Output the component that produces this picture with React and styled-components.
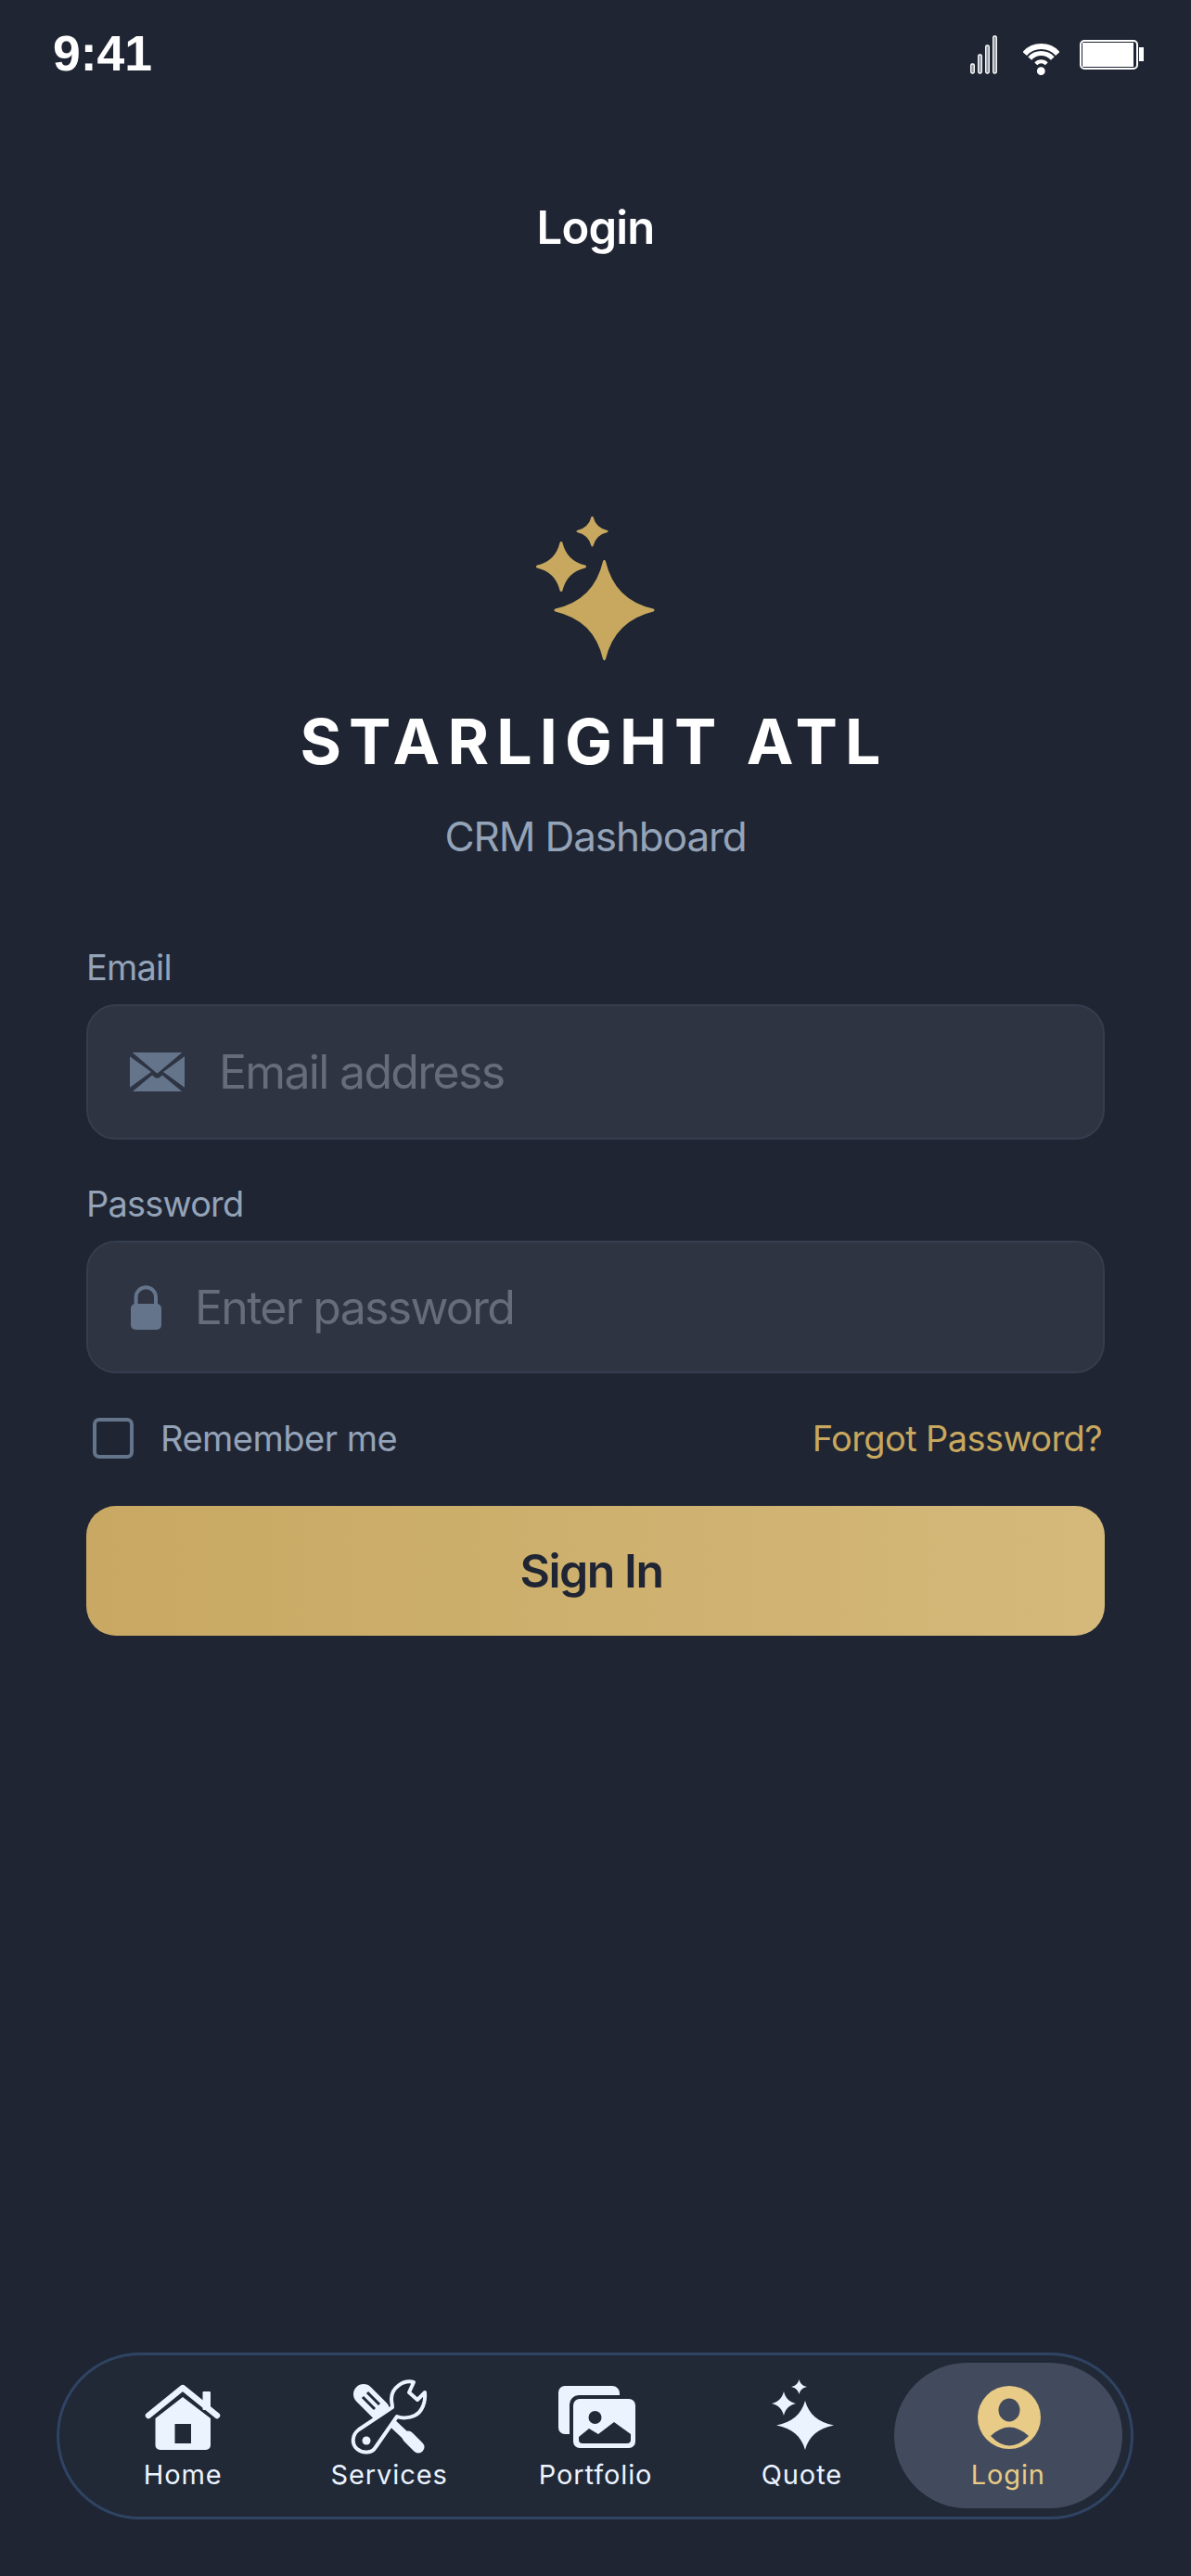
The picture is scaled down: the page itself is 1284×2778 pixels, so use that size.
import React from "react";
import styled, { createGlobalStyle } from "styled-components";

const BG = "#1f2533";
const ICON = "#ebf3ff";
const GOLD = "#c8a85f";
const SLATE = "#94a3b8";
const MUTED = "#64748b";

const Global = createGlobalStyle`
  * { box-sizing: border-box; }
  html, body { margin: 0; padding: 0; background: ${BG}; }
  body { font-family: Inter, "Liberation Sans", sans-serif; }
`;

const Page = styled.div`
  min-height: 2778px;
  display: flex;
  flex-direction: column;
  background: ${BG};
  color: #fff;
`;

const StatusBar = styled.div`
  height: 116px;
  padding: 0 51px 0 57px;
  display: flex;
  align-items: center;
  justify-content: space-between;
`;

const Time = styled.div`
  font-family: "Liberation Sans", Arial, sans-serif;
  font-weight: 700;
  font-size: 53.5px;
  line-height: 60px;
`;

const StatusIcons = styled.div`
  display: flex;
  align-items: center;
  gap: ${(p) => p.$gap || 0}px;
  svg { display: block; }
`;

const IconCluster = styled.div`
  display: flex;
  align-items: center;
  gap: 28px;
`;

const Header = styled.h1`
  height: 258px;
  margin: 0;
  display: flex;
  align-items: center;
  justify-content: center;
  font-size: 49px;
  font-weight: 600;
  letter-spacing: -0.8px;
  color: #fff;
`;

const Brand = styled.section`
  padding-top: 183px;
  display: flex;
  flex-direction: column;
  align-items: center;
  svg { display: block; }
`;

const BrandName = styled.div`
  margin-top: 47px;
  font-size: 68px;
  line-height: 80px;
  font-weight: 700;
  letter-spacing: 8.1px;
  margin-right: 3px;
  color: #fff;
`;

const BrandSub = styled.div`
  margin-top: 33px;
  font-size: 44px;
  line-height: 60px;
  letter-spacing: -1.1px;
  color: ${SLATE};
`;

const Form = styled.form`
  margin: 86px 93px 0;
  display: flex;
  flex-direction: column;
`;

const FieldLabel = styled.label`
  font-size: 38px;
  line-height: 50px;
  letter-spacing: -0.8px;
  color: ${SLATE};
  margin-top: ${(p) => p.$top || 0}px;
`;

const InputBox = styled.div`
  margin-top: 15px;
  height: ${(p) => p.$height}px;
  padding: 0 45px;
  display: flex;
  align-items: center;
  gap: ${(p) => p.$gap}px;
  background: #2e3442;
  border: 2px solid #353d4f;
  border-radius: 32px;
  svg { display: block; flex: none; }
`;

const Input = styled.input`
  flex: 1;
  min-width: 0;
  border: 0;
  outline: 0;
  padding: 0;
  background: transparent;
  font: 400 50px Inter, "Liberation Sans", sans-serif;
  letter-spacing: -1.7px;
  color: #fff;
  &::placeholder { color: #666c79; opacity: 1; }
`;

const OptionsRow = styled.div`
  margin-top: 48px;
  height: 44px;
  padding: 0 3px 0 7px;
  display: flex;
  align-items: center;
  justify-content: space-between;
`;

const Remember = styled.label`
  display: flex;
  align-items: center;
  gap: 29px;
  font-size: 38px;
  letter-spacing: -0.5px;
  color: ${SLATE};
`;

const CheckBox = styled.span`
  width: 44px;
  height: 44px;
  border: 4px solid ${MUTED};
  border-radius: 7px;
`;

const Forgot = styled.a`
  font-size: 38px;
  letter-spacing: -0.6px;
  color: ${GOLD};
`;

const SignIn = styled.button`
  margin-top: 51px;
  padding: 0 9px 0 0;
  height: 140px;
  border: 0;
  border-radius: 32px;
  background: linear-gradient(90deg, #c8a862, #d4b97b);
  font: 600 50px Inter, "Liberation Sans", sans-serif;
  letter-spacing: -1.5px;
  color: #1f2533;
`;

const Nav = styled.nav`
  margin: auto 62px 61px 61px;
  height: 180px;
  padding: 8px 21px 9px 22px;
  display: grid;
  grid-template-columns: repeat(5, 1fr);
  background: #212937;
  border: 3px solid #2f4362;
  border-radius: 90px;
`;

const NavItem = styled.div`
  margin: ${(p) => (p.$active ? "0 -12px" : "0")};
  padding-top: 12px;
  display: flex;
  flex-direction: column;
  align-items: center;
  background: ${(p) => (p.$active ? "#424b5d" : "transparent")};
  border-radius: 80px;
  color: ${(p) => (p.$active ? "#e8cb86" : ICON)};
  svg { display: block; flex: none; }
`;

const NavLabel = styled.span`
  font-size: 29px;
  line-height: 36px;
  font-weight: 400;
  letter-spacing: 0.9px;
  margin-top: 1px;
`;

const star = (cx, cy, rx, ry, a = 0.13, b = 0.45) => {
  const p = (x, y) => `${(cx + x * rx).toFixed(2)} ${(cy + y * ry).toFixed(2)}`;
  return (
    `M${p(0, -1)} C${p(a, -b)} ${p(b, -a)} ${p(1, 0)} ` +
    `C${p(b, a)} ${p(a, b)} ${p(0, 1)} ` +
    `C${p(-a, b)} ${p(-b, a)} ${p(-1, 0)} ` +
    `C${p(-b, -a)} ${p(-a, -b)} ${p(0, -1)}Z`
  );
};

const SignalIcon = () => (
  <svg width="29" height="46" viewBox="0 0 29 46">
    {[34, 24, 14, 4].map((y, i) => (
      <rect key={y} x={0.7 + i * 8} y={y} width="3.6" height={44 - y} rx="1.4" fill="#8d929c" stroke="#fff" strokeWidth="1.3" />
    ))}
  </svg>
);

const WifiIcon = () => (
  <svg width="39" height="46" viewBox="0 0 39 46" fill="none" stroke="#fff">
    <path d="M1.7 23 A24 24 0 0 1 37.3 23" strokeWidth="6" />
    <path d="M7.2 28 A16.5 16.5 0 0 1 31.8 28" strokeWidth="5" />
    <path d="M13.8 33.8 A7.7 7.7 0 0 1 25.2 33.8" strokeWidth="4" />
    <circle cx="19.3" cy="41.7" r="4.4" fill="#fff" stroke="none" />
  </svg>
);

const BatteryIcon = () => (
  <svg width="69" height="46" viewBox="0 0 69 46">
    <rect x="1" y="9" width="61" height="30" rx="4" fill="none" stroke="#fff" strokeWidth="2" />
    <rect x="3" y="11" width="55" height="26" fill="#fff" />
    <rect x="64" y="16" width="5" height="15" fill="#fff" />
  </svg>
);

const LogoStars = () => (
  <svg width="128" height="155" viewBox="0 0 128 155" fill={GOLD} stroke={GOLD} strokeWidth="3" strokeLinejoin="round">
    <path d={star(73.5, 101, 52.5, 52.5)} />
    <path d={star(27, 54, 25.5, 25.5)} />
    <path d={star(60.5, 16, 16, 15.5)} strokeWidth="2" />
  </svg>
);

const EnvelopeIcon = () => (
  <svg width="59" height="42" viewBox="0 0 59 42" fill={MUTED}>
    <path d="M2.7 0 H56.3 L31 21.5 Q29.5 22.8 28 21.5Z" />
    <path d="M0 4.3 V37.7 L23 21Z" />
    <path d="M59 4.3 V37.7 L36 21Z" />
    <path d="M3 42 L24 24.5 L27 27 Q29.5 28.5 32 27 L35 24.5 L56 42Z" />
  </svg>
);

const LockIcon = () => (
  <svg width="34" height="48" viewBox="0 0 34 48">
    <path d="M6.6 22 V13 A10.7 10.7 0 0 1 28 13 V22" fill="none" stroke={MUTED} strokeWidth="4" />
    <rect x="1" y="20" width="33" height="28" rx="5" fill={MUTED} />
  </svg>
);

const HomeIcon = () => (
  <svg width="100" height="90" viewBox="0 0 100 90">
    <g transform="translate(10 12)">
      <path d="M3 33 L40 3 L77 33" fill="none" stroke={ICON} strokeWidth="6.5" strokeLinecap="round" strokeLinejoin="round" />
      <rect x="61.5" y="7" width="8.5" height="20" rx="1" fill={ICON} />
      <path
        fillRule="evenodd"
        fill={ICON}
        d="M10.5 36 L40 13 L70 36 V65 a5 5 0 0 1 -5 5 H15.5 a5 5 0 0 1 -5 -5Z M31.5 42 V63 H49 V42Z"
      />
    </g>
  </svg>
);

const ServicesIcon = () => (
  <svg width="100" height="90" viewBox="0 0 100 90">
    <g transform="translate(1 0)">
      <path d="M21 22 L38 39" stroke={ICON} strokeWidth="22" strokeLinecap="round" fill="none" />
      <path d="M38 40 L72 72" stroke={ICON} strokeWidth="9" fill="none" />
      <path d="M69 68 L80 79" stroke={ICON} strokeWidth="13" strokeLinecap="round" fill="none" />
      <path d="M20 25 L33 38 M25 20 L38 33" stroke="#212937" strokeWidth="3" fill="none" />
      <path
        d="M75 9 C64 6 51 15 51 27 C51 31 52 33 52 36 L16 60 C8 66 8 76 14 81 C20 86 30 86 34 79 L57 46 C62 48 70 48 76 45 C84 41 88 31 87 20 L79 28 L70 20Z"
        fill="#212937"
        stroke={ICON}
        strokeWidth="4"
        strokeLinejoin="round"
      />
      <circle cx="24" cy="72" r="4.5" fill={ICON} />
    </g>
  </svg>
);

const PortfolioIcon = () => (
  <svg width="100" height="90" viewBox="0 0 100 90">
    <path fill={ICON} d="M17 13 H68 a8 8 0 0 1 8 8 V23 H32 a10 10 0 0 0 -10 10 V65 H17 a7 7 0 0 1 -7 -7 V20 a7 7 0 0 1 7 -7Z" />
    <rect x="26" y="27" width="67" height="53" rx="7" fill={ICON} />
    <circle cx="49.5" cy="47" r="7" fill="#212937" />
    <path fill="#212937" d="M32 68 L43 59 L53 65 L70 52 L88 65 V71 a4 4 0 0 1 -4 4 H36 a4 4 0 0 1 -4 -4Z" />
  </svg>
);

const QuoteIcon = () => (
  <svg width="100" height="90" viewBox="0 0 100 90" fill={ICON}>
    <path d={star(54, 55.5, 31, 26.5)} />
    <path d={star(31, 32, 13, 13)} />
    <path d={star(47.5, 14, 8.5, 8)} />
  </svg>
);

const LoginIcon = () => (
  <svg width="100" height="90" viewBox="0 0 100 90">
    <circle cx="51" cy="47" r="34" fill="#e8cb86" />
    <ellipse cx="51" cy="39" rx="11.5" ry="12.5" fill="#424b5d" />
    <path d="M31 67 Q51 48 72 67 Q51 88 31 67Z" fill="#424b5d" />
  </svg>
);

const navItems = [
  { label: "Home", Icon: HomeIcon },
  { label: "Services", Icon: ServicesIcon },
  { label: "Portfolio", Icon: PortfolioIcon },
  { label: "Quote", Icon: QuoteIcon },
  { label: "Login", Icon: LoginIcon, active: true },
];

export default function App() {
  return (
    <Page>
      <Global />
      <StatusBar>
        <Time>9:41</Time>
        <StatusIcons $gap={22}>
          <IconCluster>
            <SignalIcon />
            <WifiIcon />
          </IconCluster>
          <BatteryIcon />
        </StatusIcons>
      </StatusBar>
      <Header>Login</Header>
      <Brand>
        <LogoStars />
        <BrandName>STARLIGHT ATL</BrandName>
        <BrandSub>CRM Dashboard</BrandSub>
      </Brand>
      <Form onSubmit={(e) => e.preventDefault()}>
        <FieldLabel>Email</FieldLabel>
        <InputBox $height={146} $gap={37}>
          <EnvelopeIcon />
          <Input type="email" placeholder="Email address" />
        </InputBox>
        <FieldLabel $top={44}>Password</FieldLabel>
        <InputBox $height={143} $gap={36}>
          <LockIcon />
          <Input type="password" placeholder="Enter password" />
        </InputBox>
        <OptionsRow>
          <Remember>
            <CheckBox />
            Remember me
          </Remember>
          <Forgot>Forgot Password?</Forgot>
        </OptionsRow>
        <SignIn type="submit">Sign In</SignIn>
      </Form>
      <Nav>
        {navItems.map(({ label, Icon, active }) => (
          <NavItem key={label} $active={active}>
            <Icon />
            <NavLabel>{label}</NavLabel>
          </NavItem>
        ))}
      </Nav>
    </Page>
  );
}
